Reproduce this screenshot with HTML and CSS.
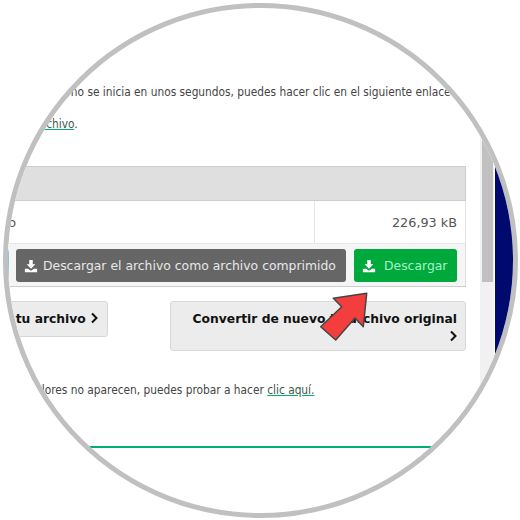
FILE: index.html
```html
<!DOCTYPE html>
<html lang="es">
<head>
<meta charset="utf-8">
<title>Descargar</title>
<link rel="stylesheet" href="styles.css">
</head>
<body>
<div class="lens">
  <div class="page">
    <main class="content">
      <p class="notice">Si la descarga no se inicia en unos segundos, puedes hacer clic en el siguiente enlace</p>
      <p class="notice second">abrir tu <a href="#">archivo</a>.</p>
      <section class="files">
        <div class="files-head"></div>
        <div class="files-row">
          <div class="file-name">foto</div>
          <div class="file-size">226,93 kB</div>
        </div>
        <div class="files-actions">
          <a class="btn btn-blue" href="#"></a>
          <a class="btn btn-gray" href="#"><svg class="dl" viewBox="0 0 16 16"><path d="M6 1h4v5h3l-5 5-5-5h3z"/><path d="M1 11h3.600l3.400 2.400 3.400-2.400H15v4H1z"/></svg>Descargar el archivo como archivo comprimido</a>
          <a class="btn btn-green" href="#"><svg class="dl" viewBox="0 0 16 16"><path d="M6 1h4v5h3l-5 5-5-5h3z"/><path d="M1 11h3.600l3.400 2.400 3.400-2.400H15v4H1z"/></svg>Descargar</a>
        </div>
      </section>
      <div class="next">
        <a class="next-btn short" href="#">a tu archivo <svg class="chev" viewBox="0 0 8 12"><path d="M2 1.500 6.500 6 2 10.500"/></svg></a>
        <a class="next-btn long" href="#">Convertir de nuevo tu archivo original <svg class="chev chev-below" viewBox="0 0 8 12"><path d="M2 1.500 6.500 6 2 10.500"/></svg></a>
      </div>
      <p class="notice retry">Si los colores no aparecen, puedes probar a hacer <a href="#">clic aquí.</a></p>
      <div class="rule"></div>
    </main>
    <div class="scrollbar"><div class="thumb"></div></div>
    <div class="navy"></div>
  </div>
  <svg class="arrow" viewBox="0 0 60 60"><path d="M46.700 8.300 13.300 13.300 21.700 21.700 0.700 41.700 15.700 55 35 33 43.300 41.700Z"/></svg>
</div>
</body>
</html>
```
FILE: styles.css
```css
html, body { margin: 0; padding: 0; background: #fff; }
body { width: 520px; height: 520px; overflow: hidden; font-family: "DejaVu Sans", sans-serif; }
.lens { position: relative; box-sizing: border-box; width: 515px; height: 515px; margin: 3px; border: 5px solid #c0c0c0; border-radius: 50%; overflow: hidden; background: #fff; }
.page { display: flex; height: 100%; margin-left: -24px; }
.content { flex: none; width: 482px; padding-top: 76px; color: #444; font-family: "DejaVu Sans Condensed", "DejaVu Sans", sans-serif; font-size: 11.800px; }
.notice { margin: 0 0 0 9px; line-height: 16px; white-space: nowrap; }
.second { margin-top: 16px; }
.notice a { color: #3a5a4c; text-decoration: underline; text-decoration-color: #00b070; }
.files { margin-top: 34px; font-family: "DejaVu Sans", sans-serif; }
.files-head { height: 33px; background: #dfdfdf; border: 1px solid #ccc; }
.files-row { display: flex; height: 42px; color: #555; font-size: 12.800px; border-left: 1px solid #e4e4e4; border-right: 1px solid #e4e4e4; }
.file-name { flex: 1; padding: 14px 0 0 6px; border-right: 1px solid #e4e4e4; }
.file-size { width: 150px; box-sizing: border-box; padding: 14px 8px 0 0; text-align: right; }
.files-actions { display: flex; gap: 8px; height: 44px; box-sizing: border-box; padding: 5px 8px; background: #f5f5f5; border: 1px solid #ddd; border-top-color: #e8e8e8; border-bottom-color: #ccc; }
.btn { display: flex; align-items: center; height: 33px; border-radius: 3px; color: #e8e8e8; font-size: 12.400px; text-decoration: none; white-space: nowrap; box-sizing: border-box; }
.btn-blue { flex: 1; margin-right: -1px; background: #8fc0de; }
.btn-gray { width: 330px; padding-left: 8px; background: #666; }
.btn-green { width: 103px; padding-left: 8px; background: #00a93b; color: #a8f5c8; }
.dl { width: 14px; height: 14px; margin-right: 5px; fill: #fff; }
.btn-green .dl { margin-right: 8px; }
.next { display: flex; justify-content: space-between; align-items: flex-start; margin-top: 14px; font-family: "DejaVu Sans", sans-serif; }
.next-btn { box-sizing: border-box; background: #ececec; border: 1px solid #d8d8d8; border-radius: 3px; color: #111; font-size: 12.300px; line-height: 16px; font-weight: bold; text-decoration: none; text-align: right; }
.short { width: 124px; height: 36px; padding: 9px 9px; white-space: nowrap; }
.long { width: 296px; height: 50px; padding: 9px 8px; }
.chev { width: 8px; height: 12px; fill: none; stroke: #111; stroke-width: 2; vertical-align: -1px; }
.chev-below { display: block; margin: 3px 0 0 auto; }
.retry { margin-top: 31px; margin-left: 14px; }
.rule { margin-top: 48px; height: 2px; background: #00b070; }
.scrollbar { flex: none; width: 14px; margin-left: 14px; background: #f1f1f1; }
.thumb { height: 274px; margin-left: 2px; width: 11px; background: #c0c0c0; }
.navy { flex: none; width: 40px; margin-left: 1px; background: #000a6e; }
.arrow { position: absolute; left: 312px; top: 277px; width: 60px; height: 60px; }
.arrow path { fill: #f43e3e; stroke: #444; stroke-width: 1.500; stroke-linejoin: round; }
```
